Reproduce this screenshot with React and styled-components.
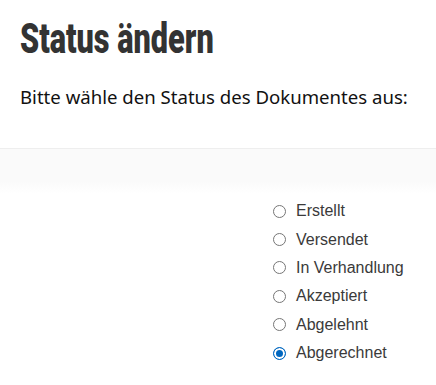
import styled, { createGlobalStyle } from 'styled-components';

const statuses = [
  { id: 'created', label: 'Erstellt' },
  { id: 'sent', label: 'Versendet' },
  { id: 'negotiation', label: 'In Verhandlung' },
  { id: 'accepted', label: 'Akzeptiert' },
  { id: 'rejected', label: 'Abgelehnt' },
  { id: 'billed', label: 'Abgerechnet' },
];

const GlobalStyle = createGlobalStyle`
  body {
    margin: 0;
    background: #fff;
  }
`;

const Dialog = styled.div`
  width: 436px;
  height: 385px;
  overflow: hidden;
`;

const Header = styled.header`
  padding: 14px 20px 0;
`;

const Title = styled.h1`
  margin: 0;
  font-family: Roboto, 'Liberation Sans', sans-serif;
  font-weight: 900;
  font-size: 42px;
  line-height: 50px;
  color: #333;
  transform: scaleX(0.73);
  transform-origin: left center;
  white-space: nowrap;
`;

const Lead = styled.p`
  margin: 20px 0 0;
  font-family: 'Noto Sans', 'DejaVu Sans', sans-serif;
  font-size: 18.6px;
  line-height: 26px;
  color: #111;
  white-space: nowrap;
`;

const Band = styled.div`
  margin-top: 38px;
  height: 44px;
  border-top: 1px solid #eee;
  background: linear-gradient(#fafafa, #fafafa 75%, #fff);
`;

const List = styled.ul`
  list-style: none;
  margin: 0;
  padding: 4px 0 0 273px;
`;

const Option = styled.li`
  display: flex;
  align-items: center;
  gap: 10px;
  height: 28.4px;
  font-family: Arial, 'Liberation Sans', sans-serif;
  font-size: 16px;
  color: #3a3a3a;
`;

const Radio = styled.span`
  box-sizing: border-box;
  width: 13px;
  height: 13px;
  border-radius: 50%;
  border: 1px solid ${(props) => (props.checked ? '#0067c0' : '#767676')};
  background: ${(props) => (props.checked ? '#0067c0' : '#fff')};
  box-shadow: ${(props) => (props.checked ? 'inset 0 0 0 2px #fff' : 'none')};
  flex-shrink: 0;
`;

const App = () => {
  return (
    <Dialog>
      <GlobalStyle />
      <Header>
        <Title>Status ändern</Title>
        <Lead>Bitte wähle den Status des Dokumentes aus:</Lead>
      </Header>
      <Band />
      <List>
        {statuses.map((s) => (
          <Option key={s.id}>
            <Radio checked={s.id === 'billed'} />
            {s.label}
          </Option>
        ))}
      </List>
    </Dialog>
  );
};

export default App;
